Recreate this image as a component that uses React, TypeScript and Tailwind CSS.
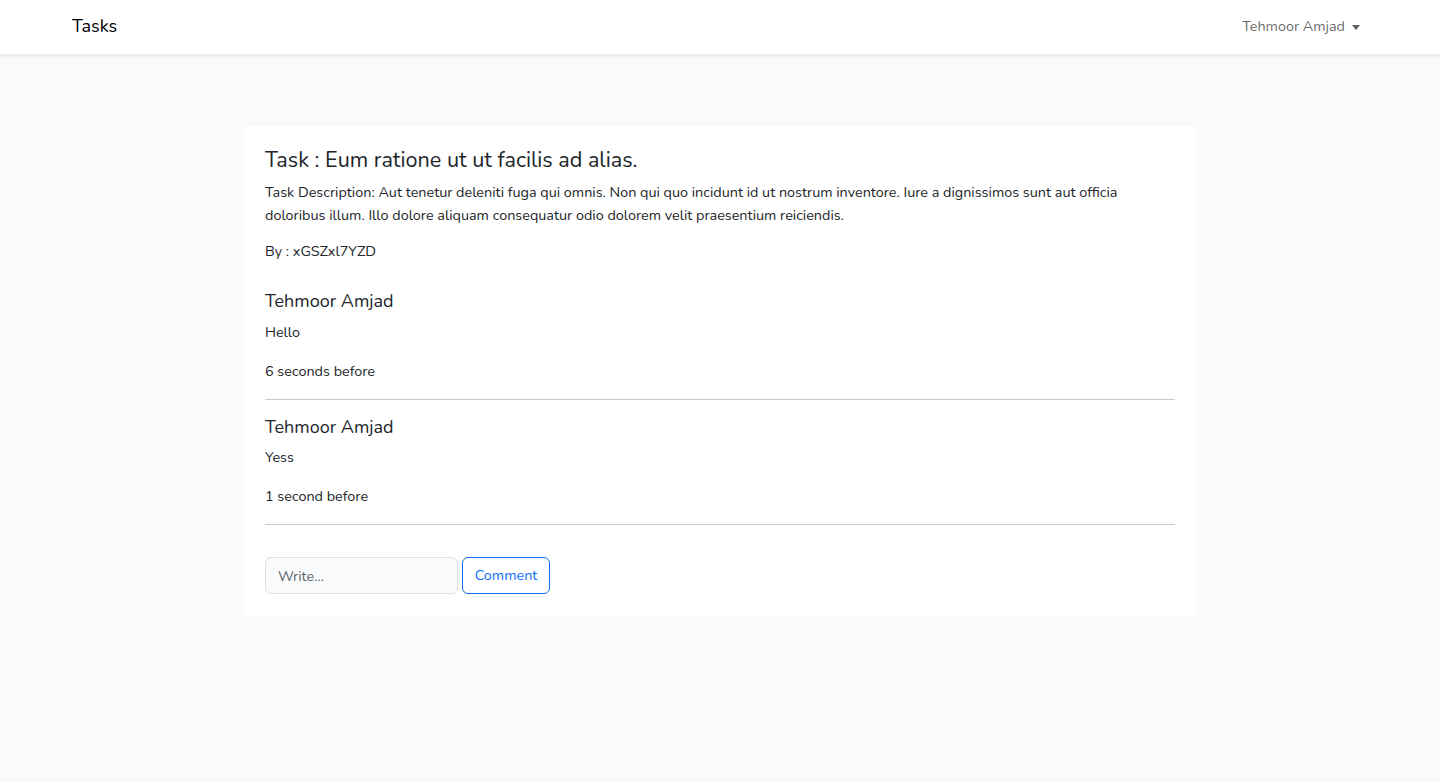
export default function App() {
  const font = { fontFamily: 'Nunito, Lato, "Noto Sans", sans-serif' };
  return (
    <div className="min-h-[782px] bg-[#f8fafc] text-[#212529] text-[14.4px] leading-[1.6]" style={font}>
      <nav className="h-[54px] bg-white shadow-[0_2px_4px_rgba(0,0,0,0.075)]">
        <div className="mx-auto flex h-full w-[1320px] items-center justify-between px-3">
          <a className="-mt-[1px] text-[18px] text-black">Tasks</a>
          <div className="flex items-center gap-[7px] pr-[8px] text-[rgba(0,0,0,0.62)]">
            <span>Tehmoor Amjad</span>
            <span className="mt-[1px] h-0 w-0 border-x-[4px] border-t-[5px] border-x-transparent border-t-[rgba(0,0,0,0.62)]"></span>
          </div>
        </div>
      </nav>
      <main className="pt-[72px]">
        <div className="mx-auto w-[952px] rounded-[6px] bg-white px-[21px] pt-[22px] pb-[22px]">
          <h4 className="mb-[7px] text-[21.6px] leading-[1.2]">Task : Eum ratione ut ut facilis ad alias.</h4>
          <p className="mb-[13px]">
            Task Description: Aut tenetur deleniti fuga qui omnis. Non qui quo incidunt id ut nostrum inventore. Iure a dignissimos sunt aut officia doloribus illum. Illo dolore aliquam consequatur odio dolorem velit praesentium reiciendis.
          </p>
          <p className="mb-[28px]">By : xGSZxl7YZD</p>
          {[
            { name: 'Tehmoor Amjad', body: 'Hello', time: '6 seconds before' },
            { name: 'Tehmoor Amjad', body: 'Yess', time: '1 second before' },
          ].map((c, i) => (
            <div key={i}>
              <h5 className="mb-[8px] text-[18px] leading-[1.2]">{c.name}</h5>
              <p className="mb-[16px]">{c.body}</p>
              <p className="mb-[16px]">{c.time}</p>
              <hr className="mt-[16px] mb-[17px] border-0 border-t border-[#c8c9ca]" />
            </div>
          ))}
          <div className="flex items-center gap-[4px] pt-[15px]">
            <input
              placeholder="Write..."
              className="h-[37px] w-[193px] rounded-[6px] border border-[#dee2e6] bg-[#f8fafc] px-[12px] text-[14.4px] placeholder:text-[#5f656b] outline-none"
              style={font}
            />
            <button className="h-[37px] w-[88px] rounded-[6px] border border-[#0d6efd] bg-white text-[14.4px] text-[#0d6efd]" style={font}>
              Comment
            </button>
          </div>
        </div>
      </main>
    </div>
  );
}
